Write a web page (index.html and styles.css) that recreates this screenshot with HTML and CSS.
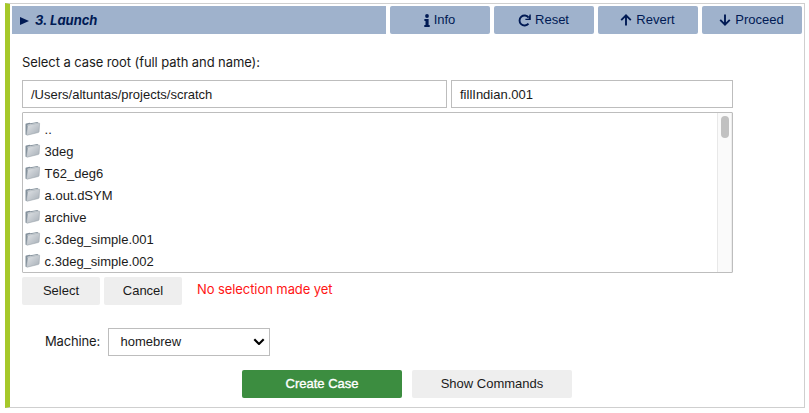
FILE: index.html
```html
<!DOCTYPE html>
<html lang="en">
<head>
<meta charset="utf-8">
<title>Launch</title>
<link rel="stylesheet" href="styles.css">
</head>
<body>
<svg class="defs" width="0" height="0">
  <defs>
    <linearGradient id="front" x1="0" y1="0" x2="1" y2="1"><stop offset="0" stop-color="#e3e6e9"/><stop offset="1" stop-color="#a6aeb6"/></linearGradient>
    <symbol id="folder" viewBox="0 0 16 16">
      <path d="M.5 4.2Q.5 3.5 1.1 3.4L4.7 2.7 5.4 3.3 12.4 1.9Q13.1 1.8 13.1 2.5V11.4L1.1 14.9Q.5 14.9.5 14.3Z" fill="#84919c"/>
      <path d="M2.6 4.8 12.9 2.7V4L2.6 6Z" fill="#f4f6f7"/>
      <path d="M2.6 6.1Q2.7 5.4 3.4 5.2L13.9 3Q14.7 2.9 14.6 3.7L14.1 11.6Q14 12.3 13.3 12.5L2.2 15.2Q1.4 15.3 1.5 14.5Z" fill="url(#front)" stroke="#929ca4" stroke-width=".5"/>
    </symbol>
  </defs>
</svg>
<main class="panel">
  <header class="bar">
    <div class="title"><svg class="tri" viewBox="0 0 9 8"><path d="M0 0 9 4 0 8Z"/></svg><span>3. Launch</span></div>
    <button class="tool"><svg class="ic info" viewBox="0 0 6 13"><circle cx="3" cy="2" r="1.9"/><path d="M.4 5H4.6V11H5.7V13H.3V11H1.5V7H.4Z"/></svg><span>Info</span></button>
    <button class="tool"><svg class="ic redo" viewBox="0 0 13 13"><path class="line" d="M10.6 3.6A5 5 0 1 0 10.5 9.6"/><path d="M12.8.4V6H7.4V4.7H10.6L11.5.4Z"/></svg><span>Reset</span></button>
    <button class="tool"><svg class="ic arrow" viewBox="0 0 12 12"><path class="line" d="M6 11.5V1.5M1.2 6.1 6 1.4 10.8 6.1"/></svg><span>Revert</span></button>
    <button class="tool"><svg class="ic arrow" viewBox="0 0 12 12"><path class="line" d="M6 .5V10.5M1.2 5.9 6 10.6 10.8 5.9"/></svg><span>Proceed</span></button>
  </header>
  <section class="content">
    <label class="prompt">Select a case root (full path and name):</label>
    <div class="fields">
      <div class="box path"><span>/Users/altuntas/projects/scratch</span></div>
      <div class="box name"><span>fillIndian.001</span></div>
    </div>
    <div class="browser">
      <ul>
        <li><svg><use href="#folder"/></svg><span>..</span></li>
        <li><svg><use href="#folder"/></svg><span>3deg</span></li>
        <li><svg><use href="#folder"/></svg><span>T62_deg6</span></li>
        <li><svg><use href="#folder"/></svg><span>a.out.dSYM</span></li>
        <li><svg><use href="#folder"/></svg><span>archive</span></li>
        <li><svg><use href="#folder"/></svg><span>c.3deg_simple.001</span></li>
        <li><svg><use href="#folder"/></svg><span>c.3deg_simple.002</span></li>
      </ul>
      <div class="track"><div class="thumb"></div></div>
    </div>
    <div class="choose">
      <button>Select</button>
      <button>Cancel</button>
      <span class="status">No selection made yet</span>
    </div>
    <div class="machine">
      <span class="mlabel">Machine:</span>
      <div class="box select"><span>homebrew</span><svg class="chev" viewBox="0 0 12 8"><path d="M1.3 1.3 6 6 10.7 1.3"/></svg></div>
    </div>
    <div class="actions">
      <button class="create">Create Case</button>
      <button>Show Commands</button>
    </div>
  </section>
</main>
</body>
</html>
```
FILE: styles.css
```css
* { box-sizing: border-box; }
body {
  margin: 0;
  padding: 3px 4px 5px 5px;
  background: #fff;
  color: #1a1a1a;
  font: 13px/20px "Liberation Sans", Arial, sans-serif;
}
.defs { display: block; height: 0; }
.panel {
  width: 800px;
  height: 405px;
  border: 1px solid #cfcfcf;
  border-left: 5px solid #a6c82a;
  padding: 2px;
}
.bar { display: flex; gap: 4px; height: 28px; color: #001a54; }
.title {
  width: 374px;
  background: #9fb2cc;
  display: flex;
  align-items: center;
  padding: 1px 0 0 8px;
  gap: 6px;
  font: italic 700 13px/21px Inter, sans-serif;
  letter-spacing: -.02px;
}
.tri { width: 9px; height: 8px; fill: currentColor; }
button {
  height: 28px;
  border: 0;
  border-radius: 2px;
  padding: 0;
  background: #eee;
  color: #1a1a1a;
  font: 13px/28px "Liberation Sans", Arial, sans-serif;
}
.bar .tool {
  width: 100px;
  background: #9fb2cc;
  color: #001a54;
  display: flex;
  align-items: center;
  justify-content: center;
  gap: 4px;
  padding-right: 1px;
}
.ic { fill: currentColor; overflow: visible; }
.line { fill: none; stroke: currentColor; stroke-width: 1.9; }
.info { width: 6px; height: 13px; }
.redo { width: 13px; height: 13px; }
.arrow { width: 12px; height: 12px; }
.content { padding: 18px 0 0 10px; }
.prompt, .status, .mlabel { font-family: Inter, sans-serif; letter-spacing: -.08px; }
.prompt { display: block; height: 28px; line-height: 21px; }
.fields { display: flex; gap: 4px; }
.box {
  height: 28px;
  border: 1px solid #bdbdbd;
  padding-left: 8px;
  line-height: 27px;
}
.path { width: 425px; }
.name { width: 282px; }
.browser {
  display: flex;
  margin-top: 4px;
  width: 711px;
  height: 161px;
  border: 1px solid #bdbdbd;
  border-radius: 1px;
  overflow: hidden;
}
ul { list-style: none; margin: 0; padding: 5px 0 0 2px; flex: 1; }
li { display: flex; height: 22px; line-height: 24px; gap: 4px; }
li svg { width: 16px; height: 16px; margin-top: 2px; }
li span { margin-left: -.4px; }
.track {
  width: 15px;
  background: #fafafa;
  border-left: 1px solid #e8e8e8;
  border-right: 1px solid #ededed;
  padding: 3px 0 0 3px;
}
.thumb { width: 8px; height: 22px; border-radius: 4px; background: #c1c1c1; }
.choose { display: flex; gap: 4px; margin-top: 4px; }
.choose button { width: 78px; }
.status { color: #ff1515; margin-left: 11px; line-height: 25px; }
.machine { display: flex; margin: 23px 0 0 23px; }
.mlabel { width: 63px; line-height: 27px; letter-spacing: -.15px; }
.select {
  width: 162px;
  padding: 0 4px 0 11.5px;
  display: flex;
  justify-content: space-between;
  align-items: center;
}
.select span { margin-top: -2px; }
.chev { width: 12px; height: 8px; fill: none; stroke: #000; stroke-width: 2.1; stroke-linejoin: round; }
.actions { display: flex; gap: 10px; margin: 14px 0 0 220px; }
.actions button { width: 160px; }
.actions .create { background: #3c8d40; color: #fff; -webkit-text-stroke: .35px #fff; }
```
